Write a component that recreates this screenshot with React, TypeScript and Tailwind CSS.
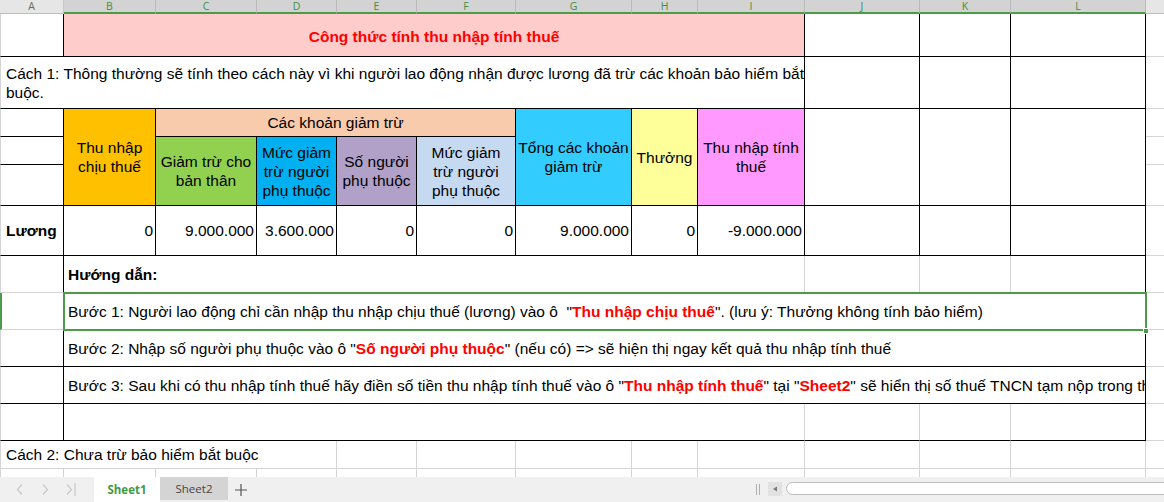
import React from "react";

type P = { className?: string; children?: React.ReactNode };

// one spreadsheet cell, each cell owns its right and bottom line
const Cell = ({ className = "", children }: P) => (
  <div className={`flex items-center overflow-hidden ${className}`}>{children}</div>
);

const Red = ({ children }: P) => <span className="font-bold text-[#ff0000]">{children}</span>;

const headers: [string, string][] = [
  ["B", "col-start-2"],
  ["C", "col-start-3"],
  ["D", "col-start-4"],
  ["E", "col-start-5"],
  ["F", "col-start-6"],
  ["G", "col-start-7"],
  ["H", "col-start-8"],
  ["I", "col-start-9"],
  ["J", "col-start-10"],
  ["K", "col-start-11"],
  ["L", "col-start-12"],
];

const App: React.FC = () => {
  return (
    <div className="relative w-[1164px] h-[502px] overflow-hidden bg-white font-['Liberation_Sans',Arial,sans-serif] text-[15.5px] leading-[19px] text-black">
      <div className="grid grid-cols-[64px_92px_101px_80px_80px_99px_116px_66px_107px_115px_91px_135px_18px] grid-rows-[14px_43px_52px_28px_28px_41px_50px_37px_37px_37px_37px_37px_28px_8px]">
        {/* column headers */}
        <div className="col-start-1 row-start-1 flex items-center justify-center bg-[#e6e6e6] border-r border-b border-r-[#c8c8c8] border-b-[#bdbdbd] font-['Open_Sans',sans-serif] text-[10.5px] leading-[11px] text-[#6a6a6a]">
          A
        </div>
        {headers.map(([l, c]) => (
          <div
            key={l}
            className={`${c} row-start-1 flex items-center justify-center bg-[#d3d3d3] border-r border-r-[#bababa] border-b-2 border-b-[#4b9b48] font-['Open_Sans',sans-serif] text-[10.5px] leading-[11px] text-[#3f8f45]`}
          >
            {l}
          </div>
        ))}
        <div className="col-start-13 row-start-1 bg-[#e6e6e6] border-b border-b-[#bdbdbd]" />

        {/* row 1 */}
        <Cell className="col-start-1 row-start-2 border-l border-r border-b border-l-[#d4d4d4] border-r-black border-b-black" />
        <Cell className="col-start-2 col-span-8 row-start-2 pt-[2px] justify-center bg-[#ffcccc] border-r border-b border-black font-bold text-[#ff0000]">
          Công thức tính thu nhập tính thuế
        </Cell>
        <Cell className="col-start-10 row-start-2 border-r border-b border-black" />
        <Cell className="col-start-11 row-start-2 border-r border-b border-black" />
        <Cell className="col-start-12 row-start-2 border-r border-b border-black" />
        <Cell className="col-start-13 row-start-2 border-b border-[#d4d4d4]" />

        {/* row 2 */}
        <Cell className="col-start-1 col-span-9 row-start-3 pl-[5px] whitespace-nowrap border-l border-r border-b border-l-[#d4d4d4] border-r-black border-b-black">
          <span>
            Cách 1: Thông thường sẽ tính theo cách này vì khi người lao động nhận được lương đã trừ các khoản bảo hiểm bắt
            <br />
            buộc.
          </span>
        </Cell>
        <Cell className="col-start-10 row-start-3 border-r border-b border-black" />
        <Cell className="col-start-11 row-start-3 border-r border-b border-black" />
        <Cell className="col-start-12 row-start-3 border-r border-b border-black" />
        <Cell className="col-start-13 row-start-3 border-b border-[#d4d4d4]" />

        {/* rows 3-5, table header */}
        <Cell className="col-start-1 row-start-4 border-l border-r border-b border-l-[#d4d4d4] border-r-black border-b-black" />
        <Cell className="col-start-1 row-start-5 border-l border-r border-b border-l-[#d4d4d4] border-r-black border-b-black" />
        <Cell className="col-start-1 row-start-6 border-l border-r border-b border-l-[#d4d4d4] border-r-black border-b-black" />
        <Cell className="col-start-2 row-start-4 row-span-3 justify-center text-center bg-[#ffc000] border-r border-b border-black">
          <span>
            Thu nhập
            <br />
            chịu thuế
          </span>
        </Cell>
        <Cell className="col-start-3 col-span-4 row-start-4 justify-center bg-[#f8cbad] border-r border-b border-black">
          Các khoản giảm trừ
        </Cell>
        <Cell className="col-start-3 row-start-5 row-span-2 justify-center text-center bg-[#92d050] border-r border-b border-black">
          <span>
            Giảm trừ cho
            <br />
            bản thân
          </span>
        </Cell>
        <Cell className="col-start-4 row-start-5 row-span-2 justify-center text-center bg-[#00b0f0] border-r border-b border-black">
          <span>
            Mức giảm
            <br />
            trừ người
            <br />
            phụ thuộc
          </span>
        </Cell>
        <Cell className="col-start-5 row-start-5 row-span-2 justify-center text-center bg-[#b1a0c7] border-r border-b border-black">
          <span>
            Số người
            <br />
            phụ thuộc
          </span>
        </Cell>
        <Cell className="col-start-6 row-start-5 row-span-2 justify-center text-center bg-[#c5d9f1] border-r border-b border-black">
          <span>
            Mức giảm
            <br />
            trừ người
            <br />
            phụ thuộc
          </span>
        </Cell>
        <Cell className="col-start-7 row-start-4 row-span-3 justify-center text-center whitespace-nowrap bg-[#33ccff] border-r border-b border-black">
          <span>
            Tổng các khoản
            <br />
            giảm trừ
          </span>
        </Cell>
        <Cell className="col-start-8 row-start-4 row-span-3 justify-center bg-[#ffff99] border-r border-b border-black">
          Thưởng
        </Cell>
        <Cell className="col-start-9 row-start-4 row-span-3 justify-center text-center bg-[#ff99ff] border-r border-b border-black">
          <span>
            Thu nhập tính
            <br />
            thuế
          </span>
        </Cell>
        <Cell className="col-start-10 row-start-4 row-span-3 border-r border-b border-black" />
        <Cell className="col-start-11 row-start-4 row-span-3 border-r border-b border-black" />
        <Cell className="col-start-12 row-start-4 row-span-3 border-r border-b border-black" />
        <Cell className="col-start-13 row-start-4 border-b border-[#d4d4d4]" />
        <Cell className="col-start-13 row-start-5 border-b border-[#d4d4d4]" />
        <Cell className="col-start-13 row-start-6 border-b border-[#d4d4d4]" />

        {/* row 6, values */}
        <Cell className="col-start-1 row-start-7 pl-[5px] font-bold border-l border-r border-b border-l-[#d4d4d4] border-r-black border-b-black">
          Lương
        </Cell>
        <Cell className="col-start-2 row-start-7 justify-end pr-[2px] border-r border-b border-black">0</Cell>
        <Cell className="col-start-3 row-start-7 justify-end pr-[2px] border-r border-b border-black">9.000.000</Cell>
        <Cell className="col-start-4 row-start-7 justify-end pr-[2px] border-r border-b border-black">3.600.000</Cell>
        <Cell className="col-start-5 row-start-7 justify-end pr-[2px] border-r border-b border-black">0</Cell>
        <Cell className="col-start-6 row-start-7 justify-end pr-[2px] border-r border-b border-black">0</Cell>
        <Cell className="col-start-7 row-start-7 justify-end pr-[2px] border-r border-b border-black">9.000.000</Cell>
        <Cell className="col-start-8 row-start-7 justify-end pr-[2px] border-r border-b border-black">0</Cell>
        <Cell className="col-start-9 row-start-7 justify-end pr-[2px] border-r border-b border-black">-9.000.000</Cell>
        <Cell className="col-start-10 row-start-7 border-r border-b border-black" />
        <Cell className="col-start-11 row-start-7 border-r border-b border-black" />
        <Cell className="col-start-12 row-start-7 border-r border-b border-black" />
        <Cell className="col-start-13 row-start-7 border-b border-[#d4d4d4]" />

        {/* row 7 */}
        <Cell className="col-start-1 row-start-8 border-l border-r border-b border-l-[#d4d4d4] border-r-black border-b-[#d4d4d4]" />
        <Cell className="col-start-2 col-span-8 row-start-8 pl-[4px] font-bold border-r border-b border-r-[#d4d4d4] border-b-black">
          Hướng dẫn:
        </Cell>
        <Cell className="col-start-10 row-start-8 border-r border-b border-r-[#d4d4d4] border-b-black" />
        <Cell className="col-start-11 row-start-8 border-r border-b border-r-[#d4d4d4] border-b-black" />
        <Cell className="col-start-12 row-start-8 border-r border-b border-black" />
        <Cell className="col-start-13 row-start-8 border-b border-[#d4d4d4]" />

        {/* row 8 */}
        <Cell className="col-start-1 row-start-9 border-l-2 border-r border-b border-l-[#4b9b48] border-r-black border-b-[#d4d4d4]" />
        <Cell className="col-start-2 col-span-11 row-start-9 pl-[4px] whitespace-pre border-r border-b border-black">
          Bước 1: Người lao động chỉ cần nhập thu nhập chịu thuế (lương) vào ô  "<Red>Thu nhập chịu thuế</Red>". (lưu ý: Thưởng không tính bảo hiểm)
        </Cell>
        <Cell className="col-start-13 row-start-9 border-b border-[#d4d4d4]" />

        {/* row 9 */}
        <Cell className="col-start-1 row-start-10 border-l border-r border-b border-l-[#d4d4d4] border-r-black border-b-black" />
        <Cell className="col-start-2 col-span-11 row-start-10 pl-[4px] whitespace-pre border-r border-b border-black">
          Bước 2: Nhập số người phụ thuộc vào ô "<Red>Số người phụ thuộc</Red>" (nếu có) =&gt; sẽ hiện thị ngay kết quả thu nhập tính thuế
        </Cell>
        <Cell className="col-start-13 row-start-10 border-b border-[#d4d4d4]" />

        {/* row 10 */}
        <Cell className="col-start-1 row-start-11 border-l border-r border-b border-l-[#d4d4d4] border-r-black border-b-black" />
        <Cell className="col-start-2 col-span-11 row-start-11 pl-[4px] whitespace-pre border-r border-b border-black">
          Bước 3: Sau khi có thu nhập tính thuế hãy điền số tiền thu nhập tính thuế vào ô "<Red>Thu nhập tính thuế</Red>" tại "<Red>Sheet2</Red>" sẽ hiển thị số thuế TNCN tạm nộp trong tháng
        </Cell>
        <Cell className="col-start-13 row-start-11 border-b border-[#d4d4d4]" />

        {/* row 11 */}
        <Cell className="col-start-1 row-start-12 border-l border-r border-b border-l-[#d4d4d4] border-r-black border-b-black" />
        <Cell className="col-start-2 col-span-8 row-start-12 border-r border-b border-r-[#d4d4d4] border-b-black" />
        <Cell className="col-start-10 row-start-12 border-r border-b border-r-[#d4d4d4] border-b-black" />
        <Cell className="col-start-11 row-start-12 border-r border-b border-r-[#d4d4d4] border-b-black" />
        <Cell className="col-start-12 row-start-12 border-r border-b border-black" />
        <Cell className="col-start-13 row-start-12 border-b border-[#d4d4d4]" />

        {/* row 12 */}
        <Cell className="col-start-1 col-span-4 row-start-13 pl-[5px] whitespace-nowrap border-l border-r border-b border-[#d4d4d4]">
          Cách 2: Chưa trừ bảo hiểm bắt buộc
        </Cell>
        <Cell className="col-start-5 row-start-13 border-r border-b border-[#d4d4d4]" />
        <Cell className="col-start-6 row-start-13 border-r border-b border-[#d4d4d4]" />
        <Cell className="col-start-7 row-start-13 border-r border-b border-[#d4d4d4]" />
        <Cell className="col-start-8 row-start-13 border-r border-b border-[#d4d4d4]" />
        <Cell className="col-start-9 row-start-13 border-r border-b border-[#d4d4d4]" />
        <Cell className="col-start-10 row-start-13 border-r border-b border-[#d4d4d4]" />
        <Cell className="col-start-11 row-start-13 border-r border-b border-[#d4d4d4]" />
        <Cell className="col-start-12 row-start-13 border-r border-b border-[#d4d4d4]" />
        <Cell className="col-start-13 row-start-13 border-b border-[#d4d4d4]" />

        {/* row 13, cut off */}
        <Cell className="col-start-1 row-start-14 border-l border-r border-[#d4d4d4]" />
        <Cell className="col-start-2 row-start-14 border-r border-[#d4d4d4]" />
        <Cell className="col-start-3 row-start-14 border-r border-[#d4d4d4]" />
        <Cell className="col-start-4 row-start-14 border-r border-[#d4d4d4]" />
        <Cell className="col-start-5 row-start-14 border-r border-[#d4d4d4]" />
        <Cell className="col-start-6 row-start-14 border-r border-[#d4d4d4]" />
        <Cell className="col-start-7 row-start-14 border-r border-[#d4d4d4]" />
        <Cell className="col-start-8 row-start-14 border-r border-[#d4d4d4]" />
        <Cell className="col-start-9 row-start-14 border-r border-[#d4d4d4]" />
        <Cell className="col-start-10 row-start-14 border-r border-[#d4d4d4]" />
        <Cell className="col-start-11 row-start-14 border-r border-[#d4d4d4]" />
        <Cell className="col-start-12 row-start-14 border-r border-[#d4d4d4]" />
      </div>

      {/* selection on B8:L8 */}
      <div className="pointer-events-none absolute left-[63px] top-[292px] w-[1084px] h-[39px] border-2 border-[#4b9b48]" />
      <div className="pointer-events-none absolute left-[1143px] top-[328px] w-[6px] h-[6px] bg-[#4b9b48] border border-white" />

      {/* sheet tabs */}
      <div className="flex h-[25px] bg-[#f0f0f0] font-['Open_Sans',sans-serif] text-[11.5px]">
        <div className="flex w-[94px] items-center">
          <svg width="76" height="25" viewBox="0 0 76 25" fill="none" stroke="#c8c8c8" strokeWidth="1.2">
            <path d="M22 7.5 L17.5 12.5 L22 17.5" />
            <path d="M43 7.5 L47.5 12.5 L43 17.5" />
            <path d="M67 7.5 L71.5 12.5 L67 17.5" />
            <path d="M75 6 V19" />
          </svg>
        </div>
        <div className="flex w-[66px] items-center justify-center bg-white font-bold text-[#3f9a45]">Sheet1</div>
        <div className="flex w-[68px] items-center justify-center bg-[#d4d4d4] mb-[2px] text-[#444]">Sheet2</div>
        <div className="flex w-[26px] items-center justify-center">
          <svg width="14" height="14" viewBox="0 0 14 14" stroke="#555" strokeWidth="1.2">
            <path d="M7 1 V13 M1 7 H13" />
          </svg>
        </div>
        <div className="flex-1" />
        <div className="flex items-center gap-[2px] mr-[8px]">
          <div className="w-px h-[11px] bg-[#b0b0b0]" />
          <div className="w-px h-[11px] bg-[#b0b0b0]" />
        </div>
        <div className="flex w-[14px] h-[14px] mt-[5px] items-center justify-center bg-[#e2e2e2] mr-[4px]">
          <svg width="6" height="6" viewBox="0 0 6 6">
            <path d="M5 0.5 V5.5 L1 3 Z" fill="#7a7a7a" />
          </svg>
        </div>
        <div className="w-[386px] h-[13px] mt-[5px] -mr-[8px] rounded-l-[7px] border border-[#bdbdbd] bg-white" />
      </div>
    </div>
  );
};

export default App;
